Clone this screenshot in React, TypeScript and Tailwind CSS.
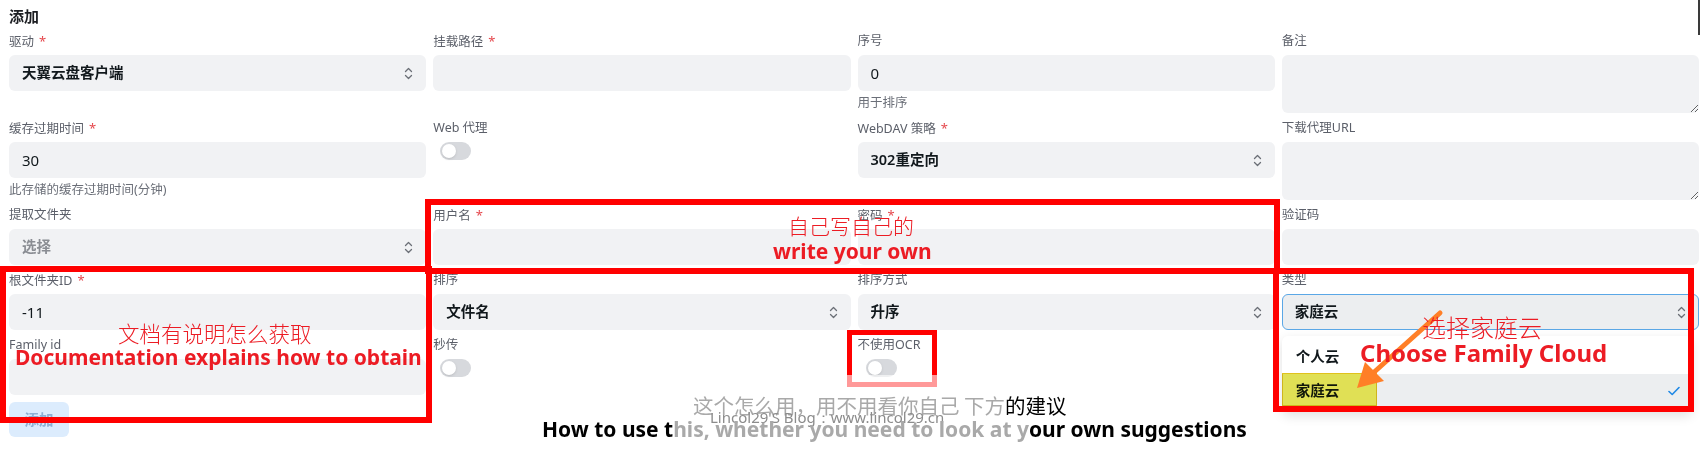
import React from "react";

function Chevrons() {
  return (
    <svg width="9" height="13" viewBox="0 0 9 13" fill="none" stroke="#6b6f76" strokeWidth="1.3" strokeLinecap="round" strokeLinejoin="round">
      <path d="M1.5 4.5 L4.5 1.5 L7.5 4.5" />
      <path d="M1.5 8.5 L4.5 11.5 L7.5 8.5" />
    </svg>
  );
}

function Label({ text, req }: { text: string; req?: boolean }) {
  return (
    <div className="h-5 mb-1 text-[12.5px] leading-5 text-[#5b5f69] whitespace-nowrap">
      {text}
      {req && <span className="ml-[5px] text-[#e5484d] text-[13px]">*</span>}
    </div>
  );
}

function Input({ value }: { value?: string }) {
  return (
    <div className="h-9 rounded-[6px] bg-[#f1f2f4] px-[13px] flex items-center text-[15px] text-[#11181c]">
      {value}
    </div>
  );
}

function Select({ value, placeholder, focused }: { value: string; placeholder?: boolean; focused?: boolean }) {
  return (
    <div
      className={
        focused
          ? "h-9 rounded-[6px] bg-[#eceef0] border border-[#5aa7e6] pl-[12px] pr-[12px] flex items-center justify-between text-[14.5px] font-semibold text-[#11181c]"
          : placeholder
          ? "h-9 rounded-[6px] bg-[#f1f2f4] pl-[13px] pr-[13px] flex items-center justify-between text-[14.5px] font-semibold text-[#8a8d93]"
          : "h-9 rounded-[6px] bg-[#f1f2f4] pl-[13px] pr-[13px] flex items-center justify-between text-[14.5px] font-semibold text-[#11181c]"
      }
    >
      <span>{value}</span>
      <Chevrons />
    </div>
  );
}

function TextArea() {
  return <textarea className="block w-full h-[58px] rounded-[6px] bg-[#f1f2f4] outline-none" readOnly />;
}

function Switch({ ml }: { ml?: boolean }) {
  return (
    <div className={ml ? "ml-[8px] w-[31px] h-[18px] rounded-full bg-[#d7d9dd] flex items-center px-[2px]" : "ml-[7px] w-[31px] h-[18px] rounded-full bg-[#d7d9dd] flex items-center px-[2px]"}>
      <div className="w-[14px] h-[14px] rounded-full bg-white shadow-sm" />
    </div>
  );
}

function Helper({ text }: { text: string }) {
  return <div className="mt-[2px] h-5 text-[12.5px] leading-5 text-[#6b6f78] whitespace-nowrap">{text}</div>;
}

export default function App() {
  return (
    <div className="relative w-[1700px] h-[475px] overflow-hidden bg-white font-['Noto_Sans','Noto_Sans_CJK_SC',sans-serif]">
      <div className="pl-[9px] pt-[6px]">
        <div className="h-5 leading-5 text-[15px] font-bold text-[#1c1e22]">添加</div>
        <div className="mt-[5px] w-[1690px] grid grid-cols-4 gap-x-[7px] gap-y-[5px] items-start">
          {/* row 1 */}
          <div>
            <Label text="驱动" req />
            <Select value="天翼云盘客户端" />
          </div>
          <div>
            <Label text="挂载路径" req />
            <Input />
          </div>
          <div>
            <Label text="序号" />
            <Input value="0" />
            <Helper text="用于排序" />
          </div>
          <div>
            <Label text="备注" />
            <TextArea />
          </div>
          {/* row 2 */}
          <div>
            <Label text="缓存过期时间" req />
            <Input value="30" />
            <Helper text="此存储的缓存过期时间(分钟)" />
          </div>
          <div>
            <Label text="Web 代理" />
            <Switch />
          </div>
          <div>
            <Label text="WebDAV 策略" req />
            <Select value="302重定向" />
          </div>
          <div>
            <Label text="下载代理URL" />
            <TextArea />
          </div>
          {/* row 3 */}
          <div>
            <Label text="提取文件夹" />
            <Select value="选择" placeholder />
          </div>
          <div>
            <Label text="用户名" req />
            <Input />
          </div>
          <div>
            <Label text="密码" req />
            <Input />
          </div>
          <div>
            <Label text="验证码" />
            <Input />
          </div>
          {/* row 4 */}
          <div>
            <Label text="根文件夹ID" req />
            <Input value="-11" />
          </div>
          <div>
            <Label text="排序" />
            <Select value="文件名" />
          </div>
          <div>
            <Label text="排序方式" />
            <Select value="升序" />
          </div>
          <div className="relative">
            <Label text="类型" />
            <Select value="家庭云" focused />
            <div className="absolute left-0 right-[7px] top-[66px] rounded-[6px] bg-white py-[4px] shadow-[0_4px_12px_rgba(0,0,0,0.12)]">
              <div className="h-[34px] pl-[14px] flex items-center text-[14.5px] font-semibold text-[#11181c]">个人云</div>
              <div className="h-[34px] pl-[14px] pr-[12px] flex items-center justify-between bg-[#eceef0] text-[14.5px] font-semibold text-[#11181c]">
                <span>家庭云</span>
                <svg width="12" height="10" viewBox="0 0 12 10" fill="none" stroke="#1e88e5" strokeWidth="1.6" strokeLinecap="round" strokeLinejoin="round">
                  <path d="M1 5.5 L4.2 8.5 L11 1.5" />
                </svg>
              </div>
            </div>
          </div>
          {/* row 5 */}
          <div>
            <Label text="Family id" />
            <Input />
          </div>
          <div>
            <Label text="秒传" />
            <Switch />
          </div>
          <div>
            <Label text="不使用OCR" />
            <Switch ml />
          </div>
          <div />
        </div>
        <div className="mt-[7px] w-[60px] h-[35px] rounded-[6px] bg-[#dcecfd] flex items-center justify-center text-[14.5px] font-semibold text-[#8fb0d4]">
          添加
        </div>
      </div>

      {/* scrollbar hint */}
      <div className="absolute left-[1698px] top-0 w-[2px] h-[35px] bg-[#3a3a3a]" />

      {/* annotation rectangles */}
      <div className="absolute left-[425px] top-[199px] w-[855px] h-[75px] border-[6px] border-[#ff0000]" />
      <div className="absolute left-0 top-[266px] w-[432px] h-[157px] border-[6px] border-[#ff0000]" />
      <div className="absolute left-[847px] top-[330px] w-[90px] h-[57px] border-[5px] border-[#ff0000]" />
      <div className="absolute left-[1273px] top-[268px] w-[421px] h-[144px] border-[6px] border-[#ff0000]" />
      <div className="absolute left-[844px] top-[375px] w-[96px] h-[14px] bg-white/60" />

      {/* yellow highlight */}
      <div className="absolute left-[1282px] top-[373px] w-[95px] h-[33px] border border-[#e0c21c] bg-[#f2f05a] mix-blend-multiply" />

      {/* orange arrow */}
      <svg className="absolute left-[1340px] top-[300px]" width="120" height="100" viewBox="1340 300 120 100">
        <line x1="1440" y1="313" x2="1372" y2="374" stroke="#ff7f27" strokeWidth="5" strokeLinecap="round" />
        <polygon points="1357,388 1365,362 1384,381" fill="#ff7f27" />
      </svg>

      {/* annotation texts */}
      <div className="absolute left-[788px] top-[212px] text-[21px] leading-[26px] text-[#ec1c24] font-['Noto_Sans_CJK_SC',sans-serif] font-light whitespace-nowrap">
        自己写自己的
      </div>
      <div className="absolute left-[773px] top-[237px] text-[21px] leading-[28px] font-bold text-[#ec1c24] font-['Noto_Sans',sans-serif] whitespace-nowrap">
        write your own
      </div>
      <div className="absolute left-[118px] top-[320px] text-[21.5px] leading-[26px] text-[#ec1c24] font-['Noto_Sans_CJK_SC',sans-serif] font-light whitespace-nowrap">
        文档有说明怎么获取
      </div>
      <div className="absolute left-[15px] top-[343px] text-[21px] leading-[28px] font-bold text-[#ec1c24] font-['Noto_Sans',sans-serif] whitespace-nowrap">
        Documentation explains how to obtain
      </div>
      <div className="absolute left-[1422px] top-[312px] text-[24px] leading-[30px] text-[#ec1c24] font-['Noto_Sans_CJK_SC',sans-serif] font-light whitespace-nowrap">
        选择家庭云
      </div>
      <div className="absolute left-[1360px] top-[338px] text-[24px] leading-[30px] font-bold text-[#ec1c24] font-['Noto_Sans',sans-serif] whitespace-nowrap">
        Choose Family Cloud
      </div>

      {/* bottom texts */}
      <div className="absolute left-[693px] top-[392px] text-[20.5px] leading-[26px] font-['Noto_Sans_CJK_SC',sans-serif] whitespace-nowrap">
        <span className="text-[#a9a9a9]">这个怎么用，用不用看你自己 下方</span>
        <span className="text-black">的建议</span>
      </div>
      <div className="absolute left-[710px] top-[408px] text-[15px] leading-[18px] text-[#8c8c8c] font-['Noto_Sans',sans-serif] whitespace-nowrap">
        Lincol29'S Blog：www.lincol29.cn
      </div>
      <div className="absolute left-[542px] top-[416px] text-[21px] leading-[26px] font-bold font-['Noto_Sans',sans-serif] whitespace-nowrap">
        <span className="text-black">How to use t</span>
        <span className="text-[#a9a9a9]">his, whether you need to look at y</span>
        <span className="text-black">our own suggestions</span>
      </div>
    </div>
  );
}
